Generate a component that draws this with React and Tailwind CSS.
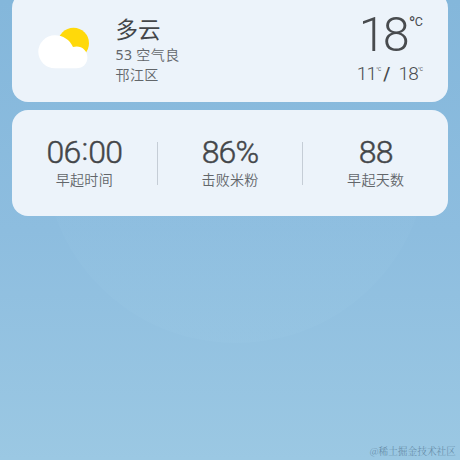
const stats = [
  { value: '06:00', label: '早起时间' },
  { value: '86%', label: '击败米粉' },
  { value: '88', label: '早起天数' },
];

function CloudSun() {
  return (
    <svg className="h-[42px] w-[52px] shrink-0" viewBox="0 0 52 42">
      <circle cx="35.5" cy="16.3" r="15.5" fill="#ffd90a" />
      <path
        d="M16.8 8.3C25 8.3 31.8 12.8 35 20C43 17.8 49.4 23 49.4 30.5C49.4 36.5 45 41.3 38.5 41.3H16.8A16.5 16.5 0 0 1 16.8 8.3Z"
        fill="#fff"
      />
    </svg>
  );
}

function Weather() {
  return (
    <section className="-mt-2 flex h-[110px] rounded-[16px] bg-[#ecf3fa] pl-[26px] pr-[25px] pt-2">
      <div className="pt-[27px]">
        <CloudSun />
      </div>
      <div className="ml-[25.5px] flex-1 pt-[15px] text-[#62666a]">
        <h1 className="text-[22.5px] font-normal leading-[30px] text-[#434649]">多云</h1>
        <p className="text-[14px] leading-[20px] tracking-[0.4px]">
          <span className="font-normal">53</span> 空气良
        </p>
        <p className="text-[14px] leading-[20px] tracking-[0.4px]">邗江区</p>
      </div>
      <div className="flex flex-col items-end font-[Roboto,sans-serif] font-light text-[#484b4e]">
        <div className="flex pt-[9px]">
          <span className="mr-[2px] text-[48.5px] leading-[51px] tracking-[-3px]">18</span>
          <span className="flex pt-[5px] font-normal">
            <span className="text-[18px] leading-[20px] tracking-[-0.5px]">°</span>
            <span className="pt-px text-[12.5px] leading-[14px]">C</span>
          </span>
        </div>
        <div className="mt-[4px] flex leading-[20px]">
          <span className="text-[19px] tracking-[-0.8px]">11</span>
          <span className="pt-[1px] text-[5px] font-normal leading-[8px]">°C</span>
          <span className="ml-[2px] text-[18px] font-medium">/</span>
          <span className="ml-[8px] text-[19px] tracking-[-0.8px]">18</span>
          <span className="pt-[1px] text-[5px] font-normal leading-[8px]">°C</span>
        </div>
      </div>
    </section>
  );
}

function StatValue({ value }) {
  const [head, tail] = value.split(':');
  return (
    <strong className="-mt-[8px] flex font-[Roboto,sans-serif] text-[32px] font-light leading-[37px] tracking-[-0.8px] text-[#434649] [-webkit-text-stroke:0.45px_#434649]">
      <span>{head}</span>
      {tail && <span className="-mt-[3px] px-px">:</span>}
      {tail && <span>{tail}</span>}
    </strong>
  );
}

export default function App() {
  return (
    <main className="relative isolate flex h-[460px] w-[460px] flex-col overflow-hidden bg-linear-to-b from-[#84b7db] via-[#8dbddf] to-[#9bc8e3] px-3 font-['Noto_Sans','Noto_Sans_CJK_SC',sans-serif] font-[350]">
      <div className="absolute left-[44px] top-[-41px] -z-10 size-[384px] rounded-full bg-linear-to-b from-[#98c7e3]/0 from-40% to-[#9bc9e6]/25" />
      <Weather />
      <section className="mt-2 flex h-[106px] items-center rounded-[16px] bg-[#ecf3fa]">
        {stats.map((s, i) => (
          <div
            key={s.label}
            className={`flex h-[43px] flex-1 flex-col items-center ${i > 0 ? 'border-l border-[#c5cdd6]' : ''}`}
          >
            <StatValue value={s.value} />
            <span className="-mt-px text-[14px] leading-[20px] tracking-[0.3px] text-[#62666a]">{s.label}</span>
          </div>
        ))}
      </section>
      <footer className="-mr-2 mb-[1px] mt-auto self-end font-['Noto_Serif_CJK_SC','Noto_Sans_CJK_SC',serif] text-[9.7px] leading-[16px] text-[#6389a5]">
        @稀土掘金技术社区
      </footer>
    </main>
  );
}
